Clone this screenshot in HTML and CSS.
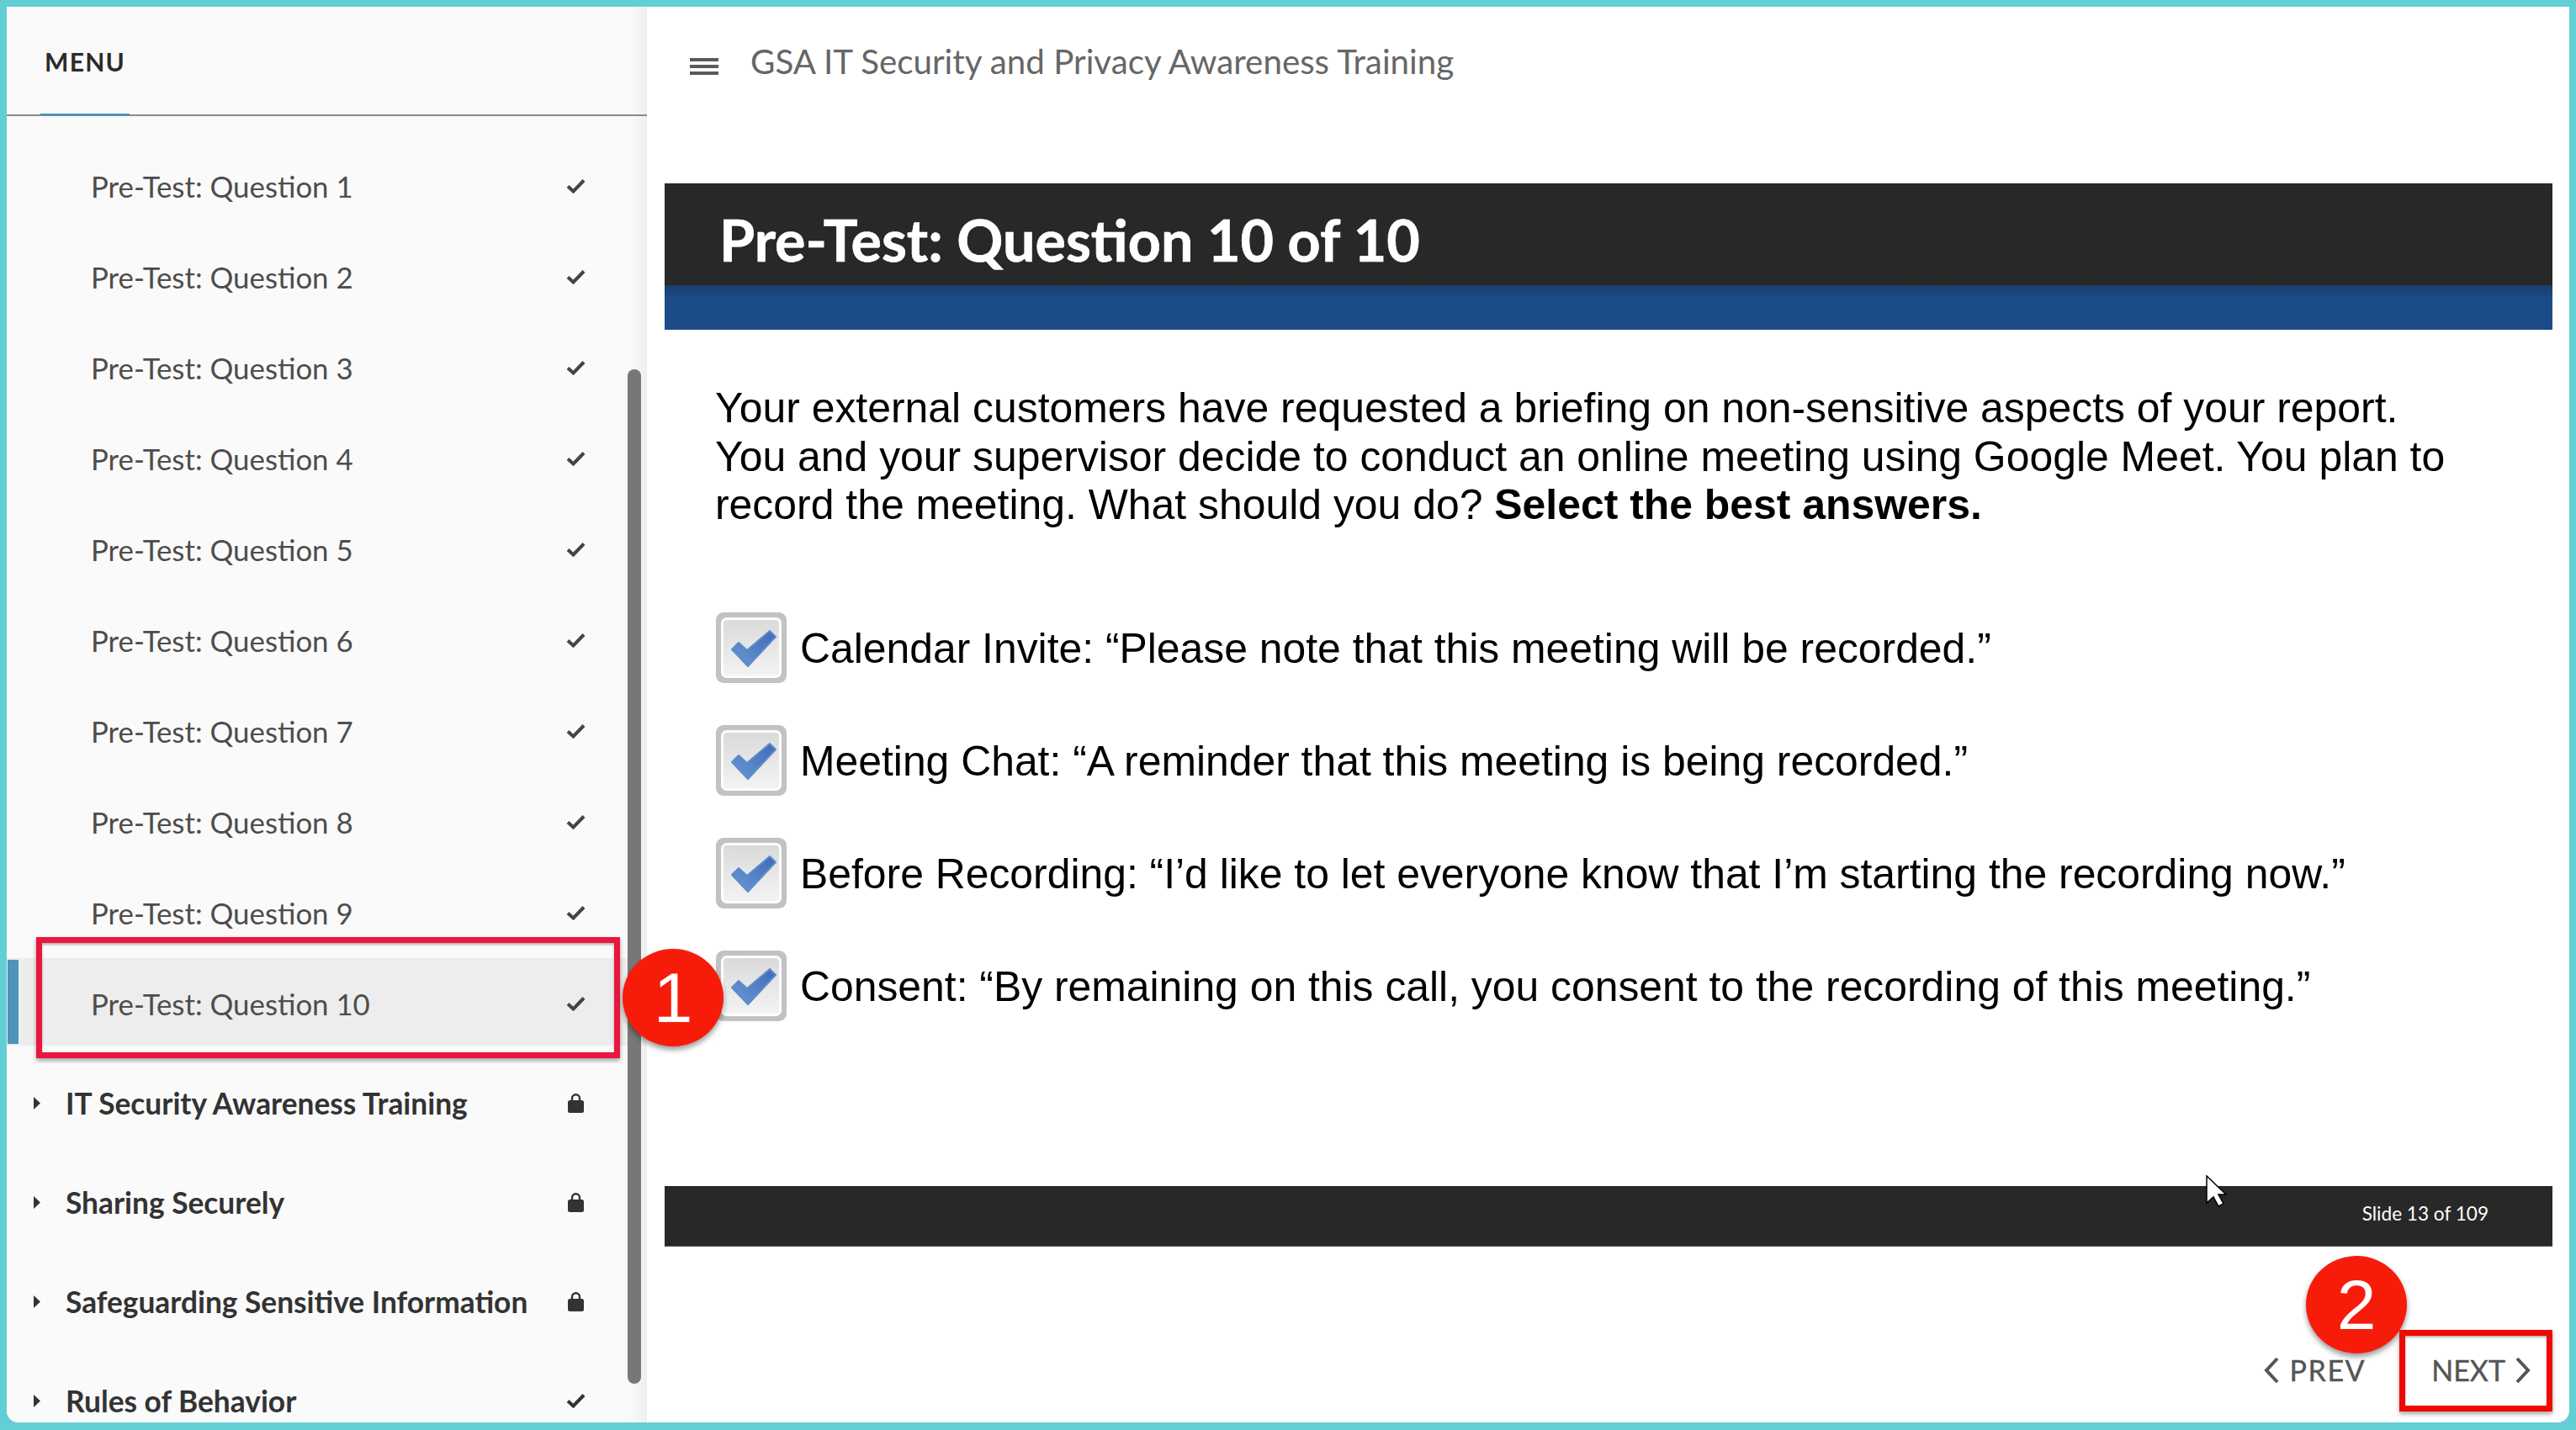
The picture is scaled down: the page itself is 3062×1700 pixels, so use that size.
FILE: index.html
```html
<!DOCTYPE html>
<html lang="en">
<head>
    <meta charset="UTF-8">
    <title>GSA IT Security and Privacy Awareness Training</title>
    <link rel="stylesheet" href="styles.css">
</head>
<body>
    <svg class="defs" width="0" height="0">
        <defs>
            <linearGradient id="box-fill" x1="0" y1="0" x2="0" y2="1">
                <stop offset="0" stop-color="#dadada"/>
                <stop offset="1" stop-color="#f3f3f3"/>
            </linearGradient>
            <linearGradient id="tick-fill" x1="0" y1="1" x2="1" y2="0">
                <stop offset="0" stop-color="#6a9ad2"/>
                <stop offset="1" stop-color="#3f68b8"/>
            </linearGradient>
            <symbol id="check" viewBox="0 0 23 17">
                <path d="M2 8.5l6.5 6L21 1.5" fill="none" stroke="currentColor" stroke-width="4"/>
            </symbol>
            <symbol id="lock" viewBox="0 0 19 23">
                <path d="M5 9V5.7a4.5 4.5 0 0 1 9 0V9" fill="none" stroke="currentColor" stroke-width="2.4"/>
                <rect x="0" y="8" width="19" height="15" rx="2.5" fill="currentColor"/>
            </symbol>
            <symbol id="caret" viewBox="0 0 8 15">
                <path d="M0 0l8 7.5L0 15z" fill="currentColor"/>
            </symbol>
            <symbol id="checkbox" viewBox="0 0 84 84">
                <rect width="84" height="84" rx="9" fill="#c2c2c2"/>
                <rect x="6" y="6" width="72" height="72" rx="7" fill="#fff"/>
                <rect x="9" y="9" width="66" height="66" rx="4" fill="url(#box-fill)"/>
                <path d="M19 44l8-8 10 9 27-23 7 7-33 35z" fill="url(#tick-fill)" stroke="#5c8ccb" stroke-width="2" stroke-linejoin="round"/>
            </symbol>
        </defs>
    </svg>

    <div class="app">
        <aside class="sidebar">
            <div class="menu-head"><span class="menu-tab">MENU</span></div>
            <ul class="menu-list">
                <li class="quiz-row"><span>Pre-Test: Question 1</span><svg class="row-icon"><use href="#check"/></svg></li>
                <li class="quiz-row"><span>Pre-Test: Question 2</span><svg class="row-icon"><use href="#check"/></svg></li>
                <li class="quiz-row"><span>Pre-Test: Question 3</span><svg class="row-icon"><use href="#check"/></svg></li>
                <li class="quiz-row"><span>Pre-Test: Question 4</span><svg class="row-icon"><use href="#check"/></svg></li>
                <li class="quiz-row"><span>Pre-Test: Question 5</span><svg class="row-icon"><use href="#check"/></svg></li>
                <li class="quiz-row"><span>Pre-Test: Question 6</span><svg class="row-icon"><use href="#check"/></svg></li>
                <li class="quiz-row"><span>Pre-Test: Question 7</span><svg class="row-icon"><use href="#check"/></svg></li>
                <li class="quiz-row"><span>Pre-Test: Question 8</span><svg class="row-icon"><use href="#check"/></svg></li>
                <li class="quiz-row"><span>Pre-Test: Question 9</span><svg class="row-icon"><use href="#check"/></svg></li>
                <li class="quiz-row active"><span>Pre-Test: Question 10</span><svg class="row-icon"><use href="#check"/></svg></li>
                <li class="section-row"><svg class="caret"><use href="#caret"/></svg><span>IT Security Awareness Training</span><svg class="row-icon lock"><use href="#lock"/></svg></li>
                <li class="section-row"><svg class="caret"><use href="#caret"/></svg><span>Sharing Securely</span><svg class="row-icon lock"><use href="#lock"/></svg></li>
                <li class="section-row"><svg class="caret"><use href="#caret"/></svg><span>Safeguarding Sensitive Information</span><svg class="row-icon lock"><use href="#lock"/></svg></li>
                <li class="section-row"><svg class="caret"><use href="#caret"/></svg><span>Rules of Behavior</span><svg class="row-icon"><use href="#check"/></svg></li>
            </ul>
            <div class="scroll-thumb"></div>
        </aside>

        <main class="content">
            <header class="topbar">
                <div class="hamburger"><i></i><i></i><i></i></div>
                <span class="course-title">GSA IT Security and Privacy Awareness Training</span>
            </header>

            <section class="slide">
                <div class="slide-head">
                    <h1>Pre-Test: Question 10 of 10</h1>
                </div>
                <div class="slide-band"></div>
                <p class="question">Your external customers have requested a briefing on non-sensitive aspects of your report. You and your supervisor decide to conduct an online meeting using Google Meet. You plan to record the meeting. What should you do? <b>Select the best answers.</b></p>
                <ul class="options">
                    <li><svg class="checkbox"><use href="#checkbox"/></svg><span>Calendar Invite: “Please note that this meeting will be recorded.”</span></li>
                    <li><svg class="checkbox"><use href="#checkbox"/></svg><span>Meeting Chat: “A reminder that this meeting is being recorded.”</span></li>
                    <li><svg class="checkbox"><use href="#checkbox"/></svg><span>Before Recording: “I’d like to let everyone know that I’m starting the recording now.”</span></li>
                    <li><svg class="checkbox"><use href="#checkbox"/></svg><span>Consent: “By remaining on this call, you consent to the recording of this meeting.”</span></li>
                </ul>
                <div class="slide-foot"><span>Slide 13 of 109</span></div>
            </section>

            <nav class="pager">
                <span class="pager-btn prev">
                    <svg class="chevron" viewBox="0 0 18 32"><path d="M16 2L3 16l13 14" fill="none" stroke="currentColor" stroke-width="4"/></svg>
                    PREV
                </span>
                <span class="pager-btn next">
                    NEXT
                    <svg class="chevron" viewBox="0 0 18 32"><path d="M2 2l13 14L2 30" fill="none" stroke="currentColor" stroke-width="4"/></svg>
                </span>
            </nav>
        </main>

        <!-- callouts drawn over the page -->
        <div class="callout-box box-one"></div>
        <div class="badge badge-one">1</div>
        <div class="badge badge-two">2</div>
        <div class="callout-box box-two"></div>
        <svg class="cursor" viewBox="0 0 25 38"><path d="M1 1v32l8-7 6 11 6-3-6-11h9z" fill="#fff" stroke="#000" stroke-width="1.5"/></svg>
    </div>
</body>
</html>
```

FILE: styles.css
```css
* {
    box-sizing: border-box;
}
html, body {
    height: 100%;
}
body {
    margin: 0;
    padding: 8px 8px 9px 8px;
    background-color: #62ced5;
    font-family: "Lato", sans-serif;
    overflow: hidden;
}
.defs {
    position: absolute;
}
.app {
    position: relative;
    display: flex;
    height: 100%;
    background-color: #fff;
    border-radius: 0 0 14px 14px;
    overflow: hidden;
}

/* sidebar */
.sidebar {
    position: relative;
    flex: 0 0 761px;
    background: linear-gradient(to right, #fafafa 97.5%, #eeeeee);
    overflow: hidden;
}
.menu-head {
    height: 130px;
    padding-left: 40px;
    display: flex;
    align-items: flex-end;
    border-bottom: 2px solid #8a8a8a;
}
.menu-tab {
    display: block;
    width: 106px;
    height: 83px;
    margin-bottom: -2px;
    padding-left: 5px;
    font-size: 30px;
    font-weight: 700;
    line-height: 36px;
    letter-spacing: 1.3px;
    color: #2b2b2b;
    border-bottom: 3px solid #4e93b9;
}
.menu-list {
    list-style: none;
    margin: 0;
    padding: 29px 0 0 0;
}
.quiz-row, .section-row {
    display: flex;
    align-items: center;
    padding-right: 73px;
}
.quiz-row {
    height: 108px;
    padding-left: 100px;
    font-size: 34.8px;
    color: #4d4d4d;
    justify-content: space-between;
}
.quiz-row.active {
    position: relative;
    background: linear-gradient(#ededed, #ededed) 0 0 / 100% 104px no-repeat;
}
.quiz-row.active::before {
    content: "";
    position: absolute;
    left: 1px;
    top: 2px;
    width: 13px;
    height: 100px;
    background-color: #4e93b9;
}
.section-row {
    height: 118px;
    padding-left: 32px;
    font-size: 35.3px;
    font-weight: 700;
    color: #333;
}
.quiz-row.active + .section-row {
    margin-top: 5px;
}
.section-row span {
    flex: 1;
    margin-left: 30px;
}
.caret {
    width: 8px;
    height: 15px;
    color: #333;
}
.row-icon {
    width: 23px;
    height: 17px;
    color: #444;
}
.row-icon.lock {
    width: 19px;
    height: 23px;
    margin-right: 2px;
    color: #333;
}
.section-row .row-icon {
    color: #333;
}
.scroll-thumb {
    position: absolute;
    left: 738px;
    top: 431px;
    width: 16px;
    height: 1206px;
    background-color: #777;
    border-radius: 8px;
}

/* main part */
.content {
    flex: 1;
    min-width: 0;
}
.topbar {
    height: 210px;
    padding: 0 0 0 51px;
    display: flex;
    align-items: flex-start;
}
.hamburger {
    width: 34px;
    margin-top: 61px;
    display: flex;
    flex-direction: column;
    gap: 4px;
}
.hamburger i {
    display: block;
    height: 4px;
    background-color: #5a5a5a;
}
.course-title {
    margin: 42px 0 0 38px;
    font-size: 40.3px;
    line-height: 46px;
    color: #666;
}
.slide {
    width: 2244px;
    margin-left: 21px;
}
.slide-head {
    height: 121px;
    background-color: #282828;
    padding-left: 65px;
}
.slide-head h1 {
    margin: 0;
    font-size: 68.2px;
    font-weight: 700;
    line-height: 134px;
    color: #fff;
    -webkit-text-stroke: 0.7px #fff;
}
.slide-band {
    height: 53px;
    background: linear-gradient(#1b3d6c, #1c4c87 30%);
}
.question {
    margin: 65px 0 0 60px;
    width: 2080px;
    font-family: "Liberation Sans", Arial, sans-serif;
    font-size: 49.9px;
    line-height: 57.5px;
    color: #000;
}
.question b {
    font-weight: 700;
}
.options {
    list-style: none;
    margin: 98px 0 0 61px;
    padding: 0;
}
.options li {
    display: flex;
    align-items: center;
    height: 84px;
    margin-bottom: 50px;
    font-family: "Liberation Sans", Arial, sans-serif;
    font-size: 49.85px;
    color: #000;
}
.options span {
    padding-top: 2px;
}
.checkbox {
    flex: none;
    width: 84px;
    height: 84px;
    margin-right: 16px;
}
.slide-foot {
    height: 72px;
    margin-top: 196px;
    background-color: #282828;
    border-bottom: 1px solid #555;
    display: flex;
    align-items: center;
    justify-content: flex-end;
    padding: 0 76px 6px 0;
    color: #fff;
    font-size: 22.6px;
}
.pager {
    width: 2244px;
    margin-left: 21px;
    display: flex;
    justify-content: flex-end;
    margin-top: 127px;
}
.pager-btn {
    display: flex;
    align-items: center;
    gap: 12px;
    font-size: 34px;
    line-height: 40px;
    color: #555;
    -webkit-text-stroke: 0.4px #555;
}
.pager-btn.prev {
    letter-spacing: 1.6px;
}
.pager-btn.next {
    margin-left: 78px;
    margin-right: 26px;
}
.chevron {
    width: 18px;
    height: 32px;
}

/* callouts */
.callout-box {
    position: absolute;
    box-shadow: 0 3px 5px rgba(0, 0, 0, 0.35), inset 0 2px 3px rgba(0, 0, 0, 0.3);
}
.box-one {
    left: 35px;
    top: 1106px;
    width: 694px;
    height: 144px;
    border: 7px solid #e8173f;
}
.box-two {
    left: 2844px;
    top: 1573px;
    width: 182px;
    height: 97px;
    border: 7px solid #ee0a00;
}
.badge {
    position: absolute;
    width: 120px;
    height: 116px;
    border-radius: 50%;
    background-color: #f71c0a;
    box-shadow: 0 4px 6px rgba(0, 0, 0, 0.4);
    color: #fff;
    font-family: "Liberation Sans", Arial, sans-serif;
    font-size: 84px;
    line-height: 116px;
    text-align: center;
}
.badge-one {
    left: 732px;
    top: 1120px;
}
.badge-two {
    left: 2733px;
    top: 1485px;
}
.cursor {
    position: absolute;
    left: 2614px;
    top: 1389px;
    width: 25px;
    height: 38px;
}
```
